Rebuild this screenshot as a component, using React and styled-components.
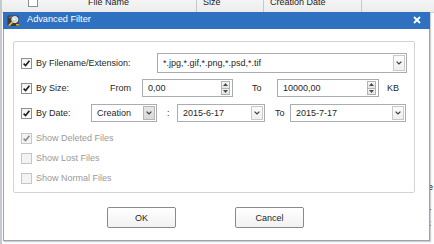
import React from 'react';
import styled, { createGlobalStyle } from 'styled-components';

const Global = createGlobalStyle`
  html, body { margin: 0; padding: 0; background: #ffffff; }
  body {
    font-family: "Liberation Sans", Arial, sans-serif;
    font-size: 9px;
    color: #1f1f1f;
    width: 434px;
    height: 244px;
    overflow: hidden;
  }
`;

const Page = styled.div`
  position: relative;
  width: 434px;
  height: 244px;
  overflow: hidden;
  background: #fdfdfd;
`;

/* ---------- background file list ---------- */
const ListPanel = styled.div`
  width: 434px;
  height: 244px;
  box-sizing: border-box;
  border-left: 2px solid #c4c8cf;
  display: flex;
  flex-direction: column;
`;

const HeaderRow = styled.div`
  display: flex;
  height: 20px;
  margin-top: -8px;
  background: linear-gradient(#fafafa, #ececec);
  border-bottom: 1px solid #d0d0d0;
  flex-shrink: 0;
`;

const HeaderCell = styled.div`
  width: ${p => p.$w}px;
  flex-shrink: 0;
  box-sizing: border-box;
  border-right: ${p => (p.$sep ? '1px solid #c9c9c9' : 'none')};
  display: flex;
  align-items: center;
  padding-left: ${p => p.$pl || 0}px;
  font-size: 9px;
  color: #222;
  white-space: nowrap;
`;

const HeaderBox = styled.span`
  width: 10px;
  height: 10px;
  box-sizing: border-box;
  border: 1px solid #8f8f8f;
  background: #fff;
  margin-left: 3px;
`;

const HeaderTitle = styled.span`
  margin-left: 50px;
`;

const ListRow = styled.div`
  display: flex;
  height: 12px;
  flex-shrink: 0;
`;

const ListCell = styled.div`
  width: ${p => p.$w}px;
  flex-shrink: 0;
  box-sizing: border-box;
  border-right: ${p => (p.$sep ? '1px solid #d6d6d6' : 'none')};
  padding-left: ${p => p.$pl || 0}px;
  font-size: 9px;
  line-height: 12px;
  color: #1a1a1a;
  white-space: nowrap;
  overflow: hidden;
`;

/* ---------- dialog ---------- */
const Dialog = styled.div`
  position: absolute;
  left: 3px;
  top: 12px;
  width: 427px;
  display: flex;
  flex-direction: column;
  box-shadow: 1px 1px 1px rgba(0, 0, 0, 0.18);
`;

const TitleBar = styled.div`
  height: 17px;
  background: #2f70c1;
  display: flex;
  align-items: flex-start;
  padding: 2px 0 0 4px;
  box-sizing: border-box;
`;

const TitleText = styled.span`
  color: #ffffff;
  font-size: 9.2px;
  line-height: 11px;
  margin-left: 7px;
  flex: 1;
`;

const CloseBtn = styled.span`
  width: 8px;
  height: 8px;
  margin: 2px 9px 0 0;
  display: flex;
`;

const Body = styled.div`
  background: #ffffff;
  border: 1px solid #97a3b6;
  border-top: none;
  padding: 12px 14px 12px 9px;
  display: flex;
  flex-direction: column;
`;

const Group = styled.div`
  height: 152px;
  box-sizing: border-box;
  border: 1px solid #d3d3d3;
  border-radius: 2px;
  padding: 11px 0 0 7px;
  display: flex;
  flex-direction: column;
`;

const Row = styled.div`
  display: flex;
  align-items: center;
  height: 20px;
  margin-top: ${p => p.$mt || 0}px;
  flex-shrink: 0;
`;

const Label = styled.span`
  width: ${p => (p.$w ? `${p.$w}px` : 'auto')};
  flex-shrink: 0;
  padding-left: ${p => p.$pl || 0}px;
  box-sizing: border-box;
  color: ${p => (p.$disabled ? '#9a9a9a' : '#1f1f1f')};
  white-space: nowrap;
  font-size: 9px;
`;

const CheckLabel = styled(Label)`
  margin-left: 4px;
`;

const Box = styled.span`
  width: 11px;
  height: 11px;
  box-sizing: border-box;
  flex-shrink: 0;
  border: 1px solid ${p => (p.$disabled ? '#c6c6c6' : '#8e8f8f')};
  background: ${p => (p.$disabled ? '#f3f3f3' : 'linear-gradient(#f2f2f2, #ffffff)')};
  display: flex;
  align-items: center;
  justify-content: center;
`;

const Field = styled.div`
  width: ${p => p.$w}px;
  height: ${p => p.$h || 18}px;
  flex-shrink: 0;
  box-sizing: border-box;
  border: 1px solid #a9acb2;
  background: #ffffff;
  display: flex;
  align-items: center;
  padding: 0 1px 0 5px;
`;

const FieldText = styled.span`
  flex: 1;
  white-space: nowrap;
  overflow: hidden;
  font-size: 9px;
  color: #1f1f1f;
`;

const DropBtn = styled.span`
  width: 12px;
  height: ${p => p.$h}px;
  box-sizing: border-box;
  border: 1px solid ${p => (p.$dark ? '#b5b5b5' : '#c9c9c9')};
  background: ${p => (p.$dark ? 'linear-gradient(#e6e6e6, #d9d9d9)' : 'linear-gradient(#fbfbfb, #efefef)')};
  display: flex;
  align-items: center;
  justify-content: center;
  flex-shrink: 0;
`;

const SpinStack = styled.span`
  width: 9px;
  height: 14px;
  display: flex;
  flex-direction: column;
  flex-shrink: 0;
  margin-right: 1px;
`;

const SpinHalf = styled.span`
  flex: 1;
  box-sizing: border-box;
  border: 1px solid #b3b3b3;
  border-top-width: ${p => (p.$down ? 0 : 1)}px;
  background: linear-gradient(#f6f6f6, #e4e4e4);
  display: flex;
  align-items: center;
  justify-content: center;
`;

const ButtonRow = styled.div`
  display: flex;
  gap: 59px;
  padding-left: 94px;
  margin-top: 14px;
`;

const Button = styled.button`
  width: 69px;
  height: 21px;
  box-sizing: border-box;
  border: 1px solid #8a8a8a;
  border-radius: 2px;
  background: linear-gradient(#ffffff, #f1f1f1);
  font-family: "Liberation Sans", Arial, sans-serif;
  font-size: 9px;
  color: #1f1f1f;
  padding: 0;
`;

/* ---------- small drawings ---------- */
const Check = ({ disabled }) => (
  <svg width="9" height="9" viewBox="0 0 9 9">
    <path d="M1.6 4.6 L3.6 6.6 L7.4 1.8" fill="none" stroke={disabled ? '#8a8a8a' : '#1d1d1d'} strokeWidth="1.6" />
  </svg>
);

const Chevron = () => (
  <svg width="6" height="4" viewBox="0 0 6 4">
    <path d="M0.6 0.6 L3 3 L5.4 0.6" fill="none" stroke="#3d3d3d" strokeWidth="1.2" />
  </svg>
);

const Tri = ({ up }) => (
  <svg width="5" height="3" viewBox="0 0 5 3">
    <path d={up ? 'M0 3 L2.5 0 L5 3 Z' : 'M0 0 L2.5 3 L5 0 Z'} fill="#4a4a4a" />
  </svg>
);

const TitleIcon = () => (
  <svg width="13" height="13" viewBox="0 0 13 13">
    <rect x="0.5" y="1.5" width="11" height="10.5" rx="1.5" fill="#3b3b3b" />
    <rect x="1.5" y="2.3" width="9" height="2" rx="0.8" fill="#6d6d6d" />
    <circle cx="7.8" cy="5.6" r="3" fill="#c9d3dc" stroke="#f2f2f2" strokeWidth="1" />
    <circle cx="7.2" cy="5" r="1.1" fill="#ffffff" opacity="0.8" />
    <path d="M5.6 7.9 L2.4 11.1" stroke="#e4b43a" strokeWidth="2" strokeLinecap="round" />
    <rect x="9" y="10" width="3" height="1.5" fill="#d8a930" />
  </svg>
);

const CloseIcon = () => (
  <svg width="8" height="8" viewBox="0 0 8 8">
    <path d="M1 1 L7 7 M7 1 L1 7" stroke="#ffffff" strokeWidth="1.8" />
  </svg>
);

const CheckBox = ({ checked, disabled }) => (
  <Box $disabled={disabled}>{checked && <Check disabled={disabled} />}</Box>
);

const Combo = ({ w, h = 18, text, dark }) => (
  <Field $w={w} $h={h}>
    <FieldText>{text}</FieldText>
    <DropBtn $h={h - 4} $dark={dark}>
      <Chevron />
    </DropBtn>
  </Field>
);

const Spin = ({ w, text }) => (
  <Field $w={w} $h={18}>
    <FieldText>{text}</FieldText>
    <SpinStack>
      <SpinHalf>
        <Tri up />
      </SpinHalf>
      <SpinHalf $down>
        <Tri />
      </SpinHalf>
    </SpinStack>
  </Field>
);

const cols = [
  { w: 23, sep: false },
  { w: 172, sep: true },
  { w: 67, sep: true },
  { w: 98, sep: true },
  { w: 72, sep: false },
];

const rowTexts = [
  '', '', '', '', '', '', '', '', '', '', '', '', '', '',
  'e', ':', 'r', 't', '.',
];

export default function App() {
  return (
    <Page>
      <Global />
      <ListPanel>
        <HeaderRow>
          <HeaderCell $w={23} />
          <HeaderCell $w={172} $sep>
            <HeaderBox />
            <HeaderTitle>File Name</HeaderTitle>
          </HeaderCell>
          <HeaderCell $w={67} $sep $pl={6}>Size</HeaderCell>
          <HeaderCell $w={98} $sep $pl={6}>Creation Date</HeaderCell>
          <HeaderCell $w={72} />
        </HeaderRow>
        {rowTexts.map((t, i) => (
          <ListRow key={i}>
            {cols.map((c, j) => (
              <ListCell key={j} $w={c.w} $sep={c.sep} $pl={j === 4 ? 66 : 4}>
                {j === 4 ? t : ''}
              </ListCell>
            ))}
          </ListRow>
        ))}
      </ListPanel>

      <Dialog>
        <TitleBar>
          <TitleIcon />
          <TitleText>Advanced Filter</TitleText>
          <CloseBtn>
            <CloseIcon />
          </CloseBtn>
        </TitleBar>
        <Body>
          <Group>
            <Row>
              <CheckBox checked />
              <CheckLabel $w={121}>By Filename/Extension:</CheckLabel>
              <Combo w={250} h={20} text="*.jpg,*.gif,*.png,*.psd,*.tif" />
            </Row>
            <Row $mt={5}>
              <CheckBox checked />
              <CheckLabel $w={74}>By Size:</CheckLabel>
              <Label $w={32}>From</Label>
              <Spin w={91} text="0,00" />
              <Label $w={44} $pl={19}>To</Label>
              <Spin w={102} text="10000,00" />
              <Label $pl={8}>KB</Label>
            </Row>
            <Row $mt={5}>
              <CheckBox checked />
              <CheckLabel $w={55}>By Date:</CheckLabel>
              <Combo w={66} text="Creation" dark />
              <Label $w={20} $pl={10}>:</Label>
              <Combo w={88} text="2015-6-17" />
              <Label $w={25} $pl={10}>To</Label>
              <Combo w={116} text="2015-7-17" />
            </Row>
            <Row $mt={5}>
              <CheckBox checked disabled />
              <CheckLabel $disabled>Show Deleted Files</CheckLabel>
            </Row>
            <Row>
              <CheckBox disabled />
              <CheckLabel $disabled>Show Lost Files</CheckLabel>
            </Row>
            <Row>
              <CheckBox disabled />
              <CheckLabel $disabled>Show Normal Files</CheckLabel>
            </Row>
          </Group>
          <ButtonRow>
            <Button>OK</Button>
            <Button>Cancel</Button>
          </ButtonRow>
        </Body>
      </Dialog>
    </Page>
  );
}
